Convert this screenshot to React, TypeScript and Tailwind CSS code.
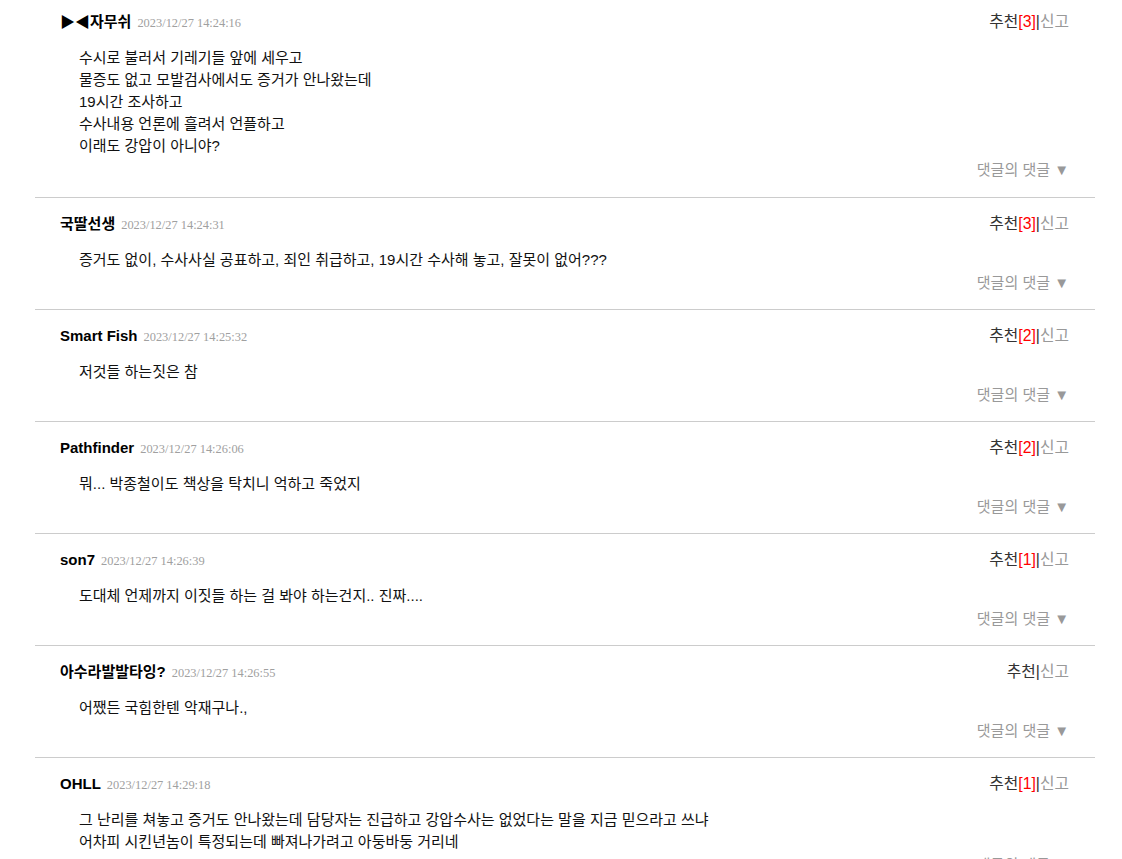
const comments = [
  {
    name: "▶◀자무쉬",
    date: "2023/12/27 14:24:16",
    rec: 3,
    lines: [
      "수시로 불러서 기레기들 앞에 세우고",
      "물증도 없고 모발검사에서도 증거가 안나왔는데",
      "19시간 조사하고",
      "수사내용 언론에 흘려서 언플하고",
      "이래도 강압이 아니야?",
    ],
  },
  {
    name: "국딸선생",
    date: "2023/12/27 14:24:31",
    rec: 3,
    lines: ["증거도 없이, 수사사실 공표하고, 죄인 취급하고, 19시간 수사해 놓고, 잘못이 없어???"],
  },
  { name: "Smart Fish", date: "2023/12/27 14:25:32", rec: 2, lines: ["저것들 하는짓은 참"] },
  { name: "Pathfinder", date: "2023/12/27 14:26:06", rec: 2, lines: ["뭐... 박종철이도 책상을 탁치니 억하고 죽었지"] },
  { name: "son7", date: "2023/12/27 14:26:39", rec: 1, lines: ["도대체 언제까지 이짓들 하는 걸 봐야 하는건지.. 진짜...."] },
  { name: "아수라발발타잉?", date: "2023/12/27 14:26:55", rec: 0, lines: ["어쨌든 국힘한텐 악재구나.,"] },
  {
    name: "OHLL",
    date: "2023/12/27 14:29:18",
    rec: 1,
    lines: [
      "그 난리를 쳐놓고 증거도 안나왔는데 담당자는 진급하고 강압수사는 없었다는 말을 지금 믿으라고 쓰냐",
      "어차피 시킨년놈이 특정되는데 빠져나가려고 아둥바둥 거리네",
    ],
  },
];

export default function App() {
  return (
    <div
      className="w-[1122px] h-[859px] overflow-hidden bg-white text-[#111]"
      style={{ fontFamily: '"Liberation Sans", "Noto Sans CJK KR", sans-serif' }}
    >
      <div className="ml-[35px] w-[1060px]">
        {comments.map((c, i) => (
          <div
            key={i}
            className={`pl-[25px] pr-[26px] border-b border-[#cccccc] ${i === 0 ? "pt-[12px] pb-[17px]" : "pt-[16px] pb-[16px]"}`}
          >
            <div className="flex items-center justify-between h-[20px]">
              <div className="flex items-baseline leading-[20px]">
                <span className="text-[15px] font-bold text-black">{c.name}</span>
                <span
                  className="ml-[6px] text-[12.4px] text-[#a0a0a0]"
                  style={{ fontFamily: '"Liberation Serif", serif' }}
                >
                  {c.date}
                </span>
              </div>
              <div className="text-[15.8px] leading-[20px] text-[#333]">
                추천
                {c.rec > 0 && <span className="text-[#ff0000]">[{c.rec}]</span>}|
                <span className="text-[#999]">신고</span>
              </div>
            </div>
            <div className="mt-[15px] pl-[19px] text-[15px] text-[#111]">
              {c.lines.map((l, j) => (
                <div key={j} className="h-[22px] leading-[22px] whitespace-nowrap">
                  {l}
                </div>
              ))}
            </div>
            <div
              className={`h-[20px] text-right text-[15px] leading-[20px] text-[#999] ${i === 0 ? "mt-[3px]" : "mt-[2px]"}`}
            >
              댓글의 댓글 ▼
            </div>
          </div>
        ))}
      </div>
    </div>
  );
}
